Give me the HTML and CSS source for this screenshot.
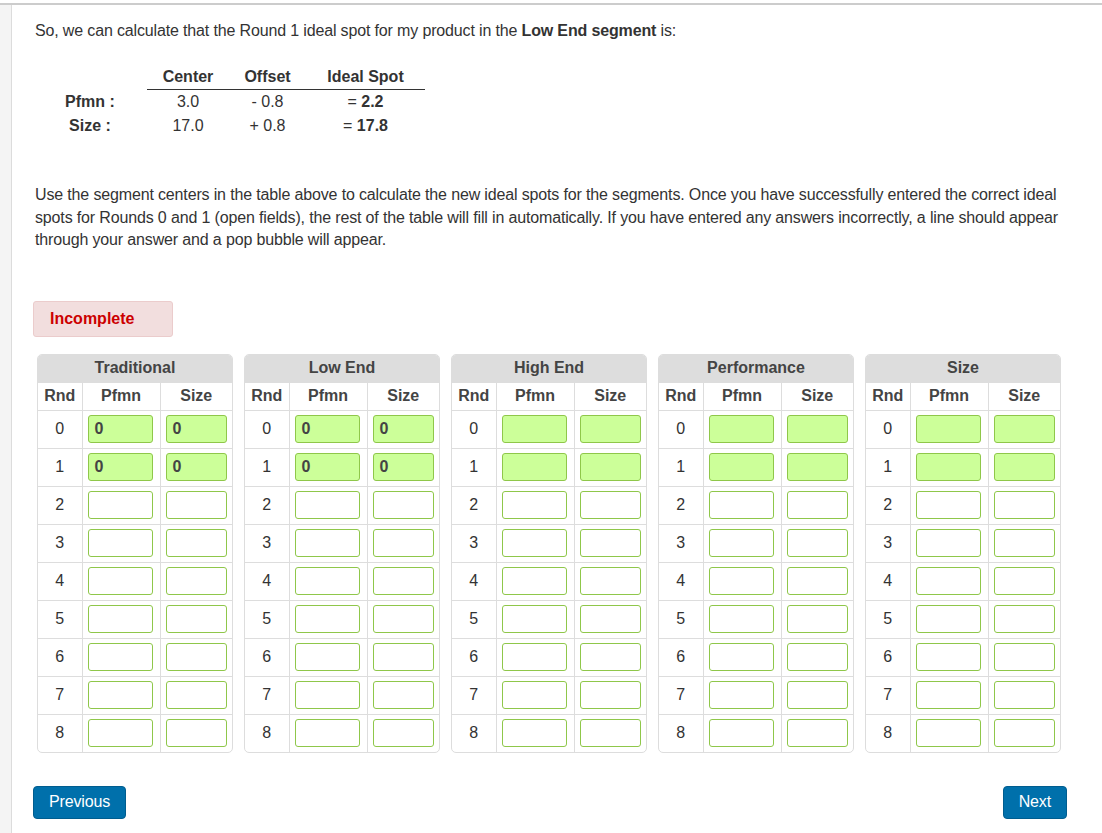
FILE: index.html
```html
<!DOCTYPE html>
<html>
<head>
<meta charset="utf-8">
<link rel="stylesheet" href="styles.css">
</head>
<body>
<div class="shell">
  <div class="rail"></div>
  <div class="main">
    <p class="intro">So, we can calculate that the Round 1 ideal spot for my product in the <b>Low End segment</b> is:</p>
    <table class="calc">
      <tr class="calc-head"><th class="lbl"></th><th class="c1">Center</th><th class="c2">Offset</th><th class="c3">Ideal Spot</th></tr>
      <tr><th class="lbl">Pfmn :</th><td>3.0</td><td>- 0.8</td><td>= <b>2.2</b></td></tr>
      <tr><th class="lbl">Size :</th><td>17.0</td><td>+ 0.8</td><td>= <b>17.8</b></td></tr>
    </table>
    <p class="instructions">Use the segment centers in the table above to calculate the new ideal spots for the segments. Once you have successfully entered the correct ideal spots for Rounds 0 and 1 (open fields), the rest of the table will fill in automatically. If you have entered any answers incorrectly, a line should appear through your answer and a pop bubble will appear.</p>
    <div class="status">Incomplete</div>
    <div class="panels" id="panels"></div>
    <div class="nav">
      <button class="btn">Previous</button>
      <button class="btn">Next</button>
    </div>
  </div>
</div>
<script src="app.js"></script>
</body>
</html>
```

FILE: app.js
```js
(function () {
  var segs = ["Traditional", "Low End", "High End", "Performance", "Size"];
  var html = "";
  segs.forEach(function (name, si) {
    var rows = "";
    for (var r = 0; r <= 8; r++) {
      var filled = r <= 1;
      var val = (filled && si < 2) ? "0" : "";
      var cls = "inp" + (filled ? " filled" : "");
      rows += '<tr class="data"><td class="rnd">' + r + '</td>' +
        '<td class="pf"><div class="' + cls + '">' + val + '</div></td>' +
        '<td class="sz"><div class="' + cls + '">' + val + '</div></td></tr>';
    }
    html += '<div class="panel"><table class="seg">' +
      '<colgroup><col class="w-rnd"><col class="w-pf"><col></colgroup>' +
      '<tr class="seg-head"><th colspan="3">' + name + '</th></tr>' +
      '<tr class="sub"><th>Rnd</th><th>Pfmn</th><th>Size</th></tr>' +
      rows + '</table></div>';
  });
  document.getElementById("panels").innerHTML = html;
})();
```

FILE: styles.css
```css
html, body {
  margin: 0;
  padding: 0;
  background: #fff;
}
body {
  font-family: "Liberation Sans", Arial, sans-serif;
  font-size: 16px;
  color: #333;
}
.shell {
  margin-top: 3px;
  border-top: 2px solid #cccccc;
  display: flex;
  min-height: 828px;
}
.rail {
  width: 11px;
  background: #f4f4f4;
  border-right: 1px solid #dcdcdc;
  flex: none;
}
.main {
  flex: 1;
  padding: 15px 35px 0 21px;
}
.intro {
  margin: 0 0 0 2px;
  line-height: 22px;
  letter-spacing: -0.15px;
}
.calc {
  margin-top: 23px;
  margin-left: 7px;
  border-collapse: collapse;
}
.calc th, .calc td {
  height: 24px;
  padding: 0;
  text-align: center;
  line-height: 24px;
}
.calc th {
  font-weight: bold;
}
.calc .lbl {
  width: 100px;
  padding-right: 7px;
}
.calc-head th.c1, .calc-head th.c2, .calc-head th.c3 {
  border-bottom: 1px solid #333;
}
.calc .c1 { width: 82px; }
.calc .c2 { width: 77px; }
.calc .c3 { width: 119px; }
.instructions {
  margin: 46px 0 0 2px;
  line-height: 22.5px;
  letter-spacing: -0.15px;
}
.status {
  margin-top: 49px;
  width: 106px;
  height: 34px;
  line-height: 34px;
  padding: 0 16px;
  background: #f2dede;
  border: 1px solid #ebcccc;
  border-radius: 3px;
  color: #cc0000;
  font-weight: bold;
}
.panels {
  margin: 17px 6px 0 4px;
  display: flex;
  gap: 11px;
}
.panel {
  width: 196px;
  flex: none;
  border: 1px solid #dddddd;
  border-radius: 5px;
  overflow: hidden;
  box-sizing: border-box;
}
.seg {
  width: 100%;
  table-layout: fixed;
  border-collapse: collapse;
  border-style: hidden;
}
.w-rnd { width: 44px; }
.w-pf { width: 78px; }
.seg th, .seg td {
  border: 1px solid #dddddd;
  padding: 0 5px;
  text-align: center;
}
.seg td.pf {
  padding: 0 7px 0 5px;
}
.seg th {
  font-weight: bold;
  color: #444;
}
.seg-head th {
  background: #dddddd;
  height: 27px;
  padding: 0;
}
.sub th {
  height: 27px;
  padding: 0;
}
.data td {
  height: 37px;
}
.data td.rnd {
  padding: 0;
  color: #333;
}
.inp {
  height: 28px;
  box-sizing: border-box;
  border: 1px solid #8fc74a;
  border-radius: 3px;
  background: #fff;
  text-align: left;
  padding-left: 6px;
  line-height: 26px;
  font-weight: bold;
  color: #444;
}
.inp.filled {
  background: #ccff99;
}
.nav {
  margin-top: 33px;
  display: flex;
  justify-content: space-between;
}
.btn {
  font-family: "Liberation Sans", Arial, sans-serif;
  font-size: 16px;
  letter-spacing: -0.15px;
  color: #fff;
  background: #0070ab;
  border: 1px solid #005d8f;
  border-radius: 4px;
  height: 33px;
  padding: 0 15px;
}
```
